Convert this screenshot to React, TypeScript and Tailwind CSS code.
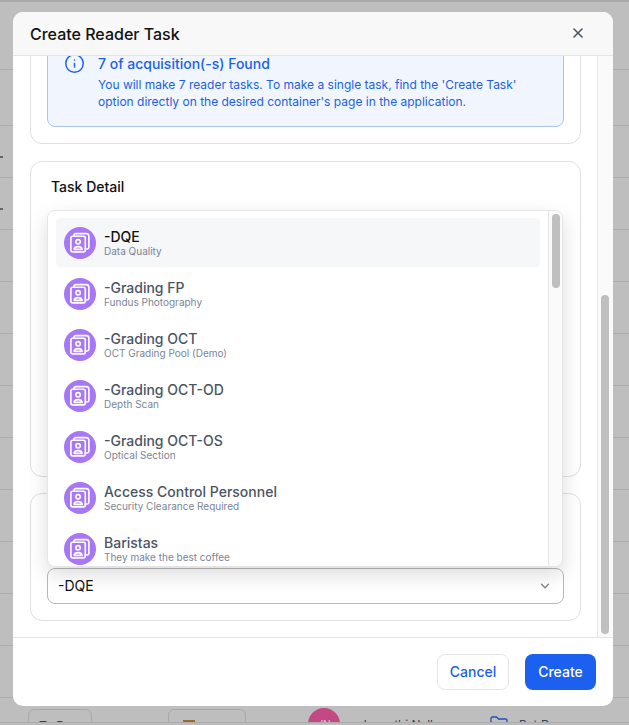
import { Info, X, ChevronDown } from "lucide-react";

const readers = [
  { name: "-DQE", note: "Data Quality" },
  { name: "-Grading FP", note: "Fundus Photography" },
  { name: "-Grading OCT", note: "OCT Grading Pool (Demo)" },
  { name: "-Grading OCT-OD", note: "Depth Scan" },
  { name: "-Grading OCT-OS", note: "Optical Section" },
  { name: "Access Control Personnel", note: "Security Clearance Required" },
  { name: "Baristas", note: "They make the best coffee" },
];

const rowHeights = ["h-[56px]", "h-[52px]", "h-[52px]", "h-[52px]", "h-[52px]", "h-[52px]", "h-[52px]", "h-[52px]", "h-[52px]", "h-[52px]", "h-[52px]", "h-[52px]"];

function ReaderAvatar() {
  return (
    <div className="flex h-8 w-8 shrink-0 items-center justify-center rounded-full bg-[#a877f6]">
      <svg width="24" height="24" viewBox="0 0 20 20" fill="none" stroke="white" strokeWidth="1.35" strokeLinejoin="round" strokeLinecap="round">
        <rect x="2.400" y="4.400" width="12" height="13" rx="1.500" />
        <path d="M5 4.400V3.600A1.400 1.400 0 0 1 6.400 2.200h8.800A2.200 2.200 0 0 1 17.400 4.400v9.200a1.400 1.400 0 0 1-1.400 1.400h-1.600" />
        <circle cx="8.400" cy="9" r="1.800" />
        <path d="M5 15.300c.3-1.500 1.700-2.300 3.400-2.300s3.100.8 3.400 2.300z" />
      </svg>
    </div>
  );
}

function Backdrop() {
  return (
    <div className="absolute inset-0 flex flex-col bg-[#bebebe]">
      <div className="h-[70px] shrink-0 border-t-2 border-b border-t-[#a9a9a9] border-b-[#acacac]" />
      {rowHeights.map((h, i) => (
        <div key={i} className={`${h} relative shrink-0 border-b border-[#acacac]`}>
          {(i === 1 || i === 2) && <span className="absolute left-0 top-[30px] h-[2px] w-[3px] bg-[#60656e]" />}
        </div>
      ))}
      <div className="absolute left-0 right-0 top-[708px] h-[14px] overflow-hidden">
        <div className="flex h-full items-start">
          <div className="ml-[28px] mt-[1px] h-[24px] w-[64px] rounded-t-md border border-[#a8a8a8] pl-[10px] pt-[9px] text-[12px] font-medium leading-[14px] text-[#384152]">
            To Do
          </div>
          <div className="ml-[76px] mt-[1px] flex h-[24px] w-[78px] rounded-t-md border border-[#a8a8a8] pl-[14px] pt-[10px]">
            <span className="h-[2px] w-[12px] bg-[#9f6a28]" />
          </div>
          <div className="ml-[62px] flex h-8 w-8 shrink-0 items-start justify-center rounded-full bg-[#c34883] pt-[10px] text-[10px] leading-[12px] text-[#e8c9d8]">
            JN
          </div>
          <span className="ml-[20px] w-[130px] shrink-0 pt-[10px] text-[12px] leading-[14px] text-[#384152]">Jeyanthi Nalla</span>
          <svg className="mt-[8px] shrink-0" width="18" height="16" viewBox="0 0 18 16" fill="none" stroke="#1d4fc4" strokeWidth="1.3">
            <path d="M1 14V2.500A1.500 1.500 0 0 1 2.500 1h4L8.500 3h7A1.500 1.500 0 0 1 17 4.500V14" />
          </svg>
          <span className="ml-[11px] pt-[10px] text-[12px] leading-[14px] text-[#384152]">Pet Doc</span>
        </div>
      </div>
      <div className="absolute left-0 right-0 top-[722px] h-[3px] border-t border-[#acacac] bg-[#bbbbbb]" />
    </div>
  );
}

export default function App() {
  return (
    <div className="relative h-[725px] w-[629px] overflow-hidden font-['Inter',sans-serif]">
      <Backdrop />

      <div className="absolute left-[13px] top-[12px] flex h-[694px] w-[600px] flex-col overflow-hidden rounded-[10px] bg-white">
        <div className="flex h-[44px] shrink-0 items-center justify-between border-b border-[#e4e4e5] bg-[#f8f8f8] pl-[17px] pr-[27px]">
          <h1 className="text-[16px] font-medium text-[#111111]">Create Reader Task</h1>
          <X size={16} strokeWidth={2.4} className="-mt-[2px] text-[#4b5563]" />
        </div>

        <div className="flex min-h-0 flex-1">
          <div className="relative flex min-w-0 flex-1 flex-col gap-[17px] overflow-hidden pl-[17px] pr-[16px]">
            <div className="-mt-[20px] h-[108px] shrink-0 rounded-xl border border-[#dedfe1] px-[16px]">
              <div className="flex h-[90px] w-[517px] gap-[13px] rounded-lg border border-[#a9c2f2] bg-[#f1f6fe] pl-[16px] pr-[10px] pt-[16px] text-[#1c5fe9]">
                <Info size={21} strokeWidth={1.7} className="-mt-[1px] shrink-0" />
                <div>
                  <p className="text-[14px] font-medium leading-[20px]">7 of acquisition(-s) Found</p>
                  <p className="mt-[2px] w-[425px] text-[12px] leading-[17px]">
                    You will make 7 reader tasks. To make a single task, find the 'Create Task' option directly on the desired container's page in the application.
                  </p>
                </div>
              </div>
            </div>

            <div className="h-[316px] shrink-0 rounded-xl border border-[#dedfe1] pl-[20px] pt-[16px]">
              <h2 className="text-[14px] font-medium leading-[18px] text-[#111111]">Task Detail</h2>
            </div>

            <div className="-mt-[1px] flex h-[128px] shrink-0 items-end rounded-xl border border-[#dedfe1] px-[16px] pb-[16px]">
              <div className="flex h-[36px] w-full items-center justify-between rounded-lg border border-[#b9b9bb] pb-[1px] pl-[10px] pr-[11px]">
                <span className="text-[14px] text-[#111111]">-DQE</span>
                <ChevronDown size={14} strokeWidth={2.2} className="text-[#7b8597]" />
              </div>
            </div>
          </div>

          <div className="flex w-[16px] shrink-0 justify-center border-l border-[#e9e9ea] bg-[#fafafa] pr-[1px]">
            <div className="mt-[239px] h-[339px] w-[8px] rounded-full bg-[#bfbfbf]" />
          </div>
        </div>

        <div className="flex h-[69px] shrink-0 items-center justify-end gap-[16px] border-t border-[#e4e4e5] pb-[1px] pr-[17px]">
          <button type="button" className="h-[36px] w-[72px] rounded-lg border border-[#e2e4e8] bg-white text-[14px] font-medium text-[#1c5fe9]">
            Cancel
          </button>
          <button type="button" className="h-[36px] w-[71px] rounded-lg bg-[#1b60ee] text-[14px] font-medium text-white">
            Create
          </button>
        </div>

        <div className="absolute left-[34px] top-[198px] flex h-[357px] w-[516px] overflow-hidden rounded-lg border border-[#e5e5e6] bg-white shadow-[0_8px_20px_rgba(0,0,0,0.14)]">
          <div className="flex min-w-0 flex-1 flex-col overflow-hidden pl-[8px] pr-[8px] pt-[7px]">
            {readers.map((r, i) => (
              <div
                key={r.name}
                className={`mb-[2px] flex h-[49px] shrink-0 items-center gap-[8px] rounded pl-[8px] ${i === 0 ? "bg-[#f6f7f9]" : ""}`}
              >
                <ReaderAvatar />
                <div className="flex flex-col">
                  <span className={`text-[14px] font-medium leading-[17px] ${i === 0 ? "text-[#111111]" : "text-[#4b5563]"}`}>{r.name}</span>
                  <span className="text-[10px] leading-[12px] text-[#7b8597]">{r.note}</span>
                </div>
              </div>
            ))}
          </div>
          <div className="flex w-[14px] shrink-0 justify-center border-l border-[#e5e5e6] bg-[#fafafa] pl-[1px] pt-[3px]">
            <div className="h-[74px] w-[8px] rounded-full bg-[#bfbfbf]" />
          </div>
        </div>
      </div>
    </div>
  );
}
